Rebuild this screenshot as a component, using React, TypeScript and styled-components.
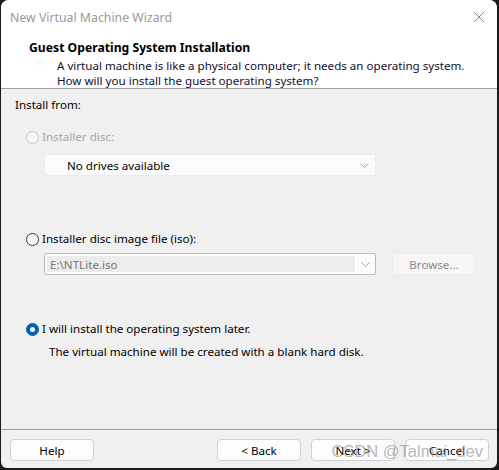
import React from 'react';
import styled, { createGlobalStyle } from 'styled-components';

const GlobalStyle = createGlobalStyle`
  html, body {
    margin: 0;
    padding: 0;
    background: #1c1c1c;
  }
  body {
    font-family: "Noto Sans", "Open Sans", sans-serif;
    font-size: 11.6px;
    color: #000;
  }
  * {
    box-sizing: border-box;
  }
`;

const Screen = styled.div`
  width: 499px;
  height: 470px;
  display: flex;
  padding: 0 2px 2px 1px;
`;

const Window = styled.div`
  position: relative;
  flex: 1;
  display: flex;
  flex-direction: column;
  background: #f0f0f0;
  border-radius: 8px 8px 6px 6px;
  overflow: hidden;
`;

const TitleBar = styled.div`
  height: 34px;
  flex-shrink: 0;
  display: flex;
  align-items: center;
  justify-content: space-between;
  padding: 0 10px 0 9px;
  background: #fff;
  color: #9a9a9a;
  font-size: 12.3px;
`;

const CloseBtn = styled.span`
  display: flex;
  width: 12px;
  height: 12px;
  margin-right: 2px;
`;

const Header = styled.div`
  flex-shrink: 0;
  background: #fff;
  padding: 6px 0 0 28px;
  height: 55px;
  border-bottom: 1px solid #a0a0a0;
`;

const HeaderTitle = styled.div`
  font-weight: 700;
  font-size: 12.2px;
  line-height: 16px;
  margin-bottom: 2px;
`;

const HeaderText = styled.div`
  padding-left: 28px;
  line-height: 15px;
  color: #101030;
`;

const Body = styled.div`
  flex: 1;
  padding: 8px 14px 0 14px;
  display: flex;
  flex-direction: column;
`;

const Label = styled.div`
  line-height: 16px;
`;

const Gap = styled.div<{ $h?: number; $w?: number }>`
  flex-shrink: 0;
  height: ${(p) => p.$h ?? 0}px;
  width: ${(p) => (p.$w ? `${p.$w}px` : 'auto')};
`;

const OptionRow = styled.label<{ $disabled?: boolean }>`
  display: flex;
  align-items: center;
  gap: 3px;
  margin-left: 11px;
  line-height: 16px;
  color: ${(p) => (p.$disabled ? '#a6a6a6' : '#000')};
`;

const Radio = styled.span<{ $state: 'disabled' | 'off' | 'on' }>`
  width: 13px;
  height: 13px;
  border-radius: 50%;
  display: flex;
  align-items: center;
  justify-content: center;
  background: ${(p) => (p.$state === 'on' ? '#005fb8' : p.$state === 'disabled' ? '#f5f5f5' : '#f8f8f8')};
  border: 1px solid
    ${(p) => (p.$state === 'on' ? '#005fb8' : p.$state === 'disabled' ? '#c4c4c4' : '#3a3a3a')};

  &::after {
    content: '';
    display: ${(p) => (p.$state === 'on' ? 'block' : 'none')};
    width: 5px;
    height: 5px;
    border-radius: 50%;
    background: #fff;
  }
`;

const FieldRow = styled.div`
  display: flex;
  align-items: center;
  margin-left: 29px;
`;

const Combo = styled.div<{ $bordered?: boolean }>`
  width: 332px;
  height: 22px;
  display: flex;
  align-items: center;
  justify-content: space-between;
  background: ${(p) => (p.$bordered ? '#fcfcfc' : '#fbfbfb')};
  border: 1px solid ${(p) => (p.$bordered ? '#b9b9b9' : '#ececec')};
  border-radius: 2px;
  padding: ${(p) => (p.$bordered ? '2px 5px 2px 2px' : '0 6px 0 22px')};
`;

const ComboText = styled.span<{ $muted?: boolean }>`
  flex: 1;
  align-self: stretch;
  display: flex;
  align-items: center;
  color: ${(p) => (p.$muted ? '#777' : '#000')};
  background: ${(p) => (p.$muted ? '#ececec' : 'transparent')};
  padding-left: ${(p) => (p.$muted ? '3px' : '0')};
  margin-right: ${(p) => (p.$muted ? '6px' : '0')};
`;

const Chevron = () => (
  <svg width="9" height="5" viewBox="0 0 9 5">
    <path d="M0.5 0.5 L4.5 4.5 L8.5 0.5" fill="none" stroke="#a5a5a5" strokeWidth="1" />
  </svg>
);

const Button = styled.button<{ $disabled?: boolean }>`
  width: 84px;
  height: 22px;
  font-family: inherit;
  font-size: 11.6px;
  color: ${(p) => (p.$disabled ? '#8a8a8a' : '#000')};
  background: ${(p) => (p.$disabled ? '#f6f6f6' : '#fdfdfd')};
  border: 1px solid ${(p) => (p.$disabled ? '#ececec' : '#d0d0d0')};
  border-radius: 4px;
  padding: 0;
`;

const Note = styled.div`
  margin-left: 34px;
  line-height: 16px;
`;

const Footer = styled.div`
  flex-shrink: 0;
  height: 39px;
  border-top: 1px solid #a0a0a0;
  display: flex;
  align-items: flex-start;
  padding: 9px 8px 0 9px;
  gap: 10px;
`;

const Spacer = styled.div`
  flex: 1;
`;

const Watermark = styled.div`
  position: absolute;
  right: 14px;
  bottom: 7px;
  font-family: "Liberation Sans", Arial, sans-serif;
  font-size: 16.5px;
  color: rgba(135, 135, 135, 0.6);
  pointer-events: none;
`;

export default function App() {
  return (
    <>
      <GlobalStyle />
      <Screen>
        <Window>
          <TitleBar>
            <span>New Virtual Machine Wizard</span>
            <CloseBtn>
              <svg width="12" height="12" viewBox="0 0 12 12">
                <path d="M1 1 L11 11 M11 1 L1 11" stroke="#8a8a8a" strokeWidth="1" />
              </svg>
            </CloseBtn>
          </TitleBar>
          <Header>
            <HeaderTitle>Guest Operating System Installation</HeaderTitle>
            <HeaderText>
              A virtual machine is like a physical computer; it needs an operating system.
              <br />
              How will you install the guest operating system?
            </HeaderText>
          </Header>
          <Body>
            <Label>Install from:</Label>
            <Gap $h={16} />
            <OptionRow $disabled>
              <Radio $state="disabled" />
              Installer disc:
            </OptionRow>
            <Gap $h={9} />
            <FieldRow>
              <Combo>
                <ComboText>No drives available</ComboText>
                <Chevron />
              </Combo>
            </FieldRow>
            <Gap $h={55} />
            <OptionRow>
              <Radio $state="off" />
              Installer disc image file (iso):
            </OptionRow>
            <Gap $h={6} />
            <FieldRow>
              <Combo $bordered>
                <ComboText $muted>E:\NTLite.iso</ComboText>
                <Chevron />
              </Combo>
              <Gap $w={16} />
              <Button $disabled>Browse...</Button>
            </FieldRow>
            <Gap $h={46} />
            <OptionRow>
              <Radio $state="on" />
              I will install the operating system later.
            </OptionRow>
            <Gap $h={7} />
            <Note>The virtual machine will be created with a blank hard disk.</Note>
          </Body>
          <Footer>
            <Button>Help</Button>
            <Spacer />
            <Button>&lt; Back</Button>
            <Button>Next &gt;</Button>
            <Button>Cancel</Button>
          </Footer>
          <Watermark>CSDN @Talmai_dev</Watermark>
        </Window>
      </Screen>
    </>
  );
}
